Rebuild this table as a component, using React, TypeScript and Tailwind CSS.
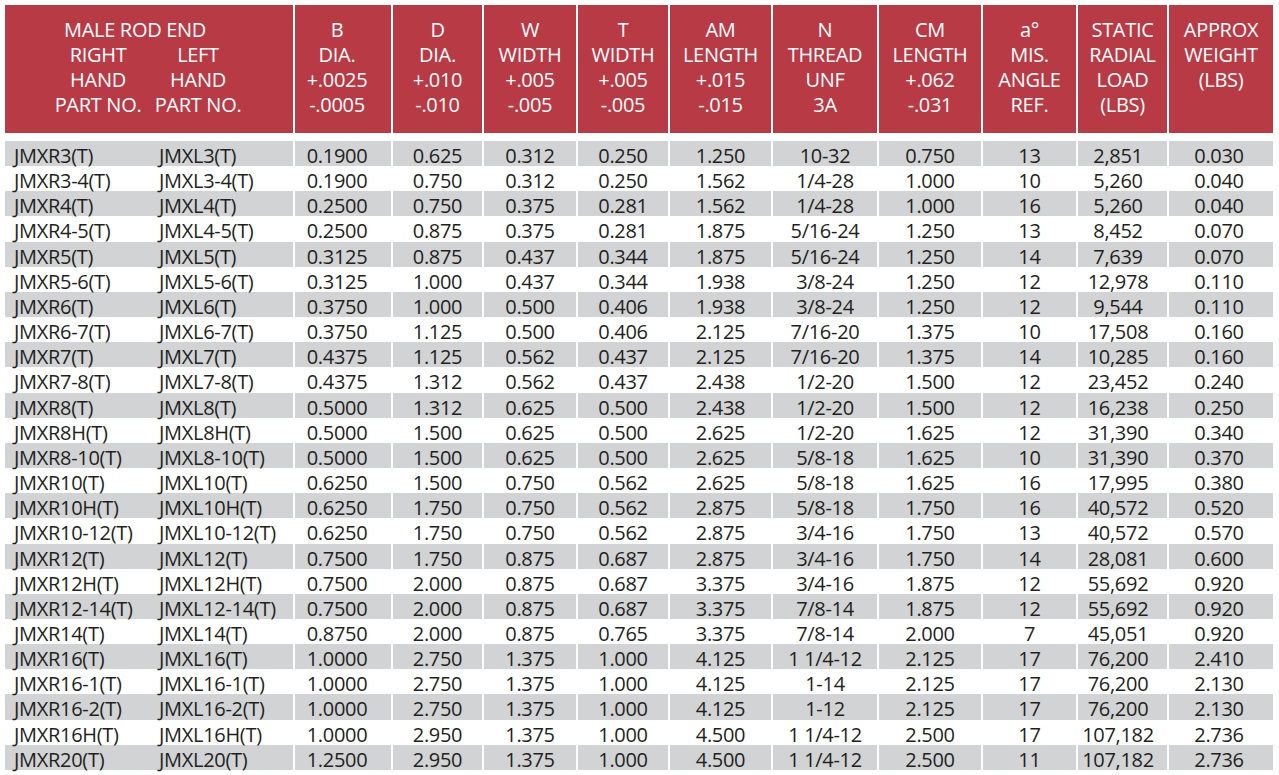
import React from "react"

const headers: string[][] = [
  ["B", "DIA.", "+.0025", "-.0005"],
  ["D", "DIA.", "+.010", "-.010"],
  ["W", "WIDTH", "+.005", "-.005"],
  ["T", "WIDTH", "+.005", "-.005"],
  ["AM", "LENGTH", "+.015", "-.015"],
  ["N", "THREAD", "UNF", "3A"],
  ["CM", "LENGTH", "+.062", "-.031"],
  ["a°", "MIS.", "ANGLE", "REF."],
  ["STATIC", "RADIAL", "LOAD", "(LBS)"],
  ["APPROX", "WEIGHT", "(LBS)"],
]

// widths include the 2px white divider on the left
const headCols = [
  "w-[98px] pr-[12px]",
  "w-[91px]",
  "w-[94px]",
  "w-[92px]",
  "w-[103px]",
  "w-[106px]",
  "w-[104px]",
  "w-[95px]",
  "w-[91px]",
  "w-[106px]",
]

const bodyCols = [
  "w-[98px] pr-[12px]",
  "w-[91px]",
  "w-[94px]",
  "w-[92px]",
  "w-[103px]",
  "w-[106px]",
  "w-[104px]",
  "w-[95px]",
  "w-[91px] pr-[9px]",
  "w-[106px] pr-[4px]",
]

const rows: string[][] = [
  ["JMXR3(T)", "JMXL3(T)", "0.1900", "0.625", "0.312", "0.250", "1.250", "10-32", "0.750", "13", "2,851", "0.030"],
  ["JMXR3-4(T)", "JMXL3-4(T)", "0.1900", "0.750", "0.312", "0.250", "1.562", "1/4-28", "1.000", "10", "5,260", "0.040"],
  ["JMXR4(T)", "JMXL4(T)", "0.2500", "0.750", "0.375", "0.281", "1.562", "1/4-28", "1.000", "16", "5,260", "0.040"],
  ["JMXR4-5(T)", "JMXL4-5(T)", "0.2500", "0.875", "0.375", "0.281", "1.875", "5/16-24", "1.250", "13", "8,452", "0.070"],
  ["JMXR5(T)", "JMXL5(T)", "0.3125", "0.875", "0.437", "0.344", "1.875", "5/16-24", "1.250", "14", "7,639", "0.070"],
  ["JMXR5-6(T)", "JMXL5-6(T)", "0.3125", "1.000", "0.437", "0.344", "1.938", "3/8-24", "1.250", "12", "12,978", "0.110"],
  ["JMXR6(T)", "JMXL6(T)", "0.3750", "1.000", "0.500", "0.406", "1.938", "3/8-24", "1.250", "12", "9,544", "0.110"],
  ["JMXR6-7(T)", "JMXL6-7(T)", "0.3750", "1.125", "0.500", "0.406", "2.125", "7/16-20", "1.375", "10", "17,508", "0.160"],
  ["JMXR7(T)", "JMXL7(T)", "0.4375", "1.125", "0.562", "0.437", "2.125", "7/16-20", "1.375", "14", "10,285", "0.160"],
  ["JMXR7-8(T)", "JMXL7-8(T)", "0.4375", "1.312", "0.562", "0.437", "2.438", "1/2-20", "1.500", "12", "23,452", "0.240"],
  ["JMXR8(T)", "JMXL8(T)", "0.5000", "1.312", "0.625", "0.500", "2.438", "1/2-20", "1.500", "12", "16,238", "0.250"],
  ["JMXR8H(T)", "JMXL8H(T)", "0.5000", "1.500", "0.625", "0.500", "2.625", "1/2-20", "1.625", "12", "31,390", "0.340"],
  ["JMXR8-10(T)", "JMXL8-10(T)", "0.5000", "1.500", "0.625", "0.500", "2.625", "5/8-18", "1.625", "10", "31,390", "0.370"],
  ["JMXR10(T)", "JMXL10(T)", "0.6250", "1.500", "0.750", "0.562", "2.625", "5/8-18", "1.625", "16", "17,995", "0.380"],
  ["JMXR10H(T)", "JMXL10H(T)", "0.6250", "1.750", "0.750", "0.562", "2.875", "5/8-18", "1.750", "16", "40,572", "0.520"],
  ["JMXR10-12(T)", "JMXL10-12(T)", "0.6250", "1.750", "0.750", "0.562", "2.875", "3/4-16", "1.750", "13", "40,572", "0.570"],
  ["JMXR12(T)", "JMXL12(T)", "0.7500", "1.750", "0.875", "0.687", "2.875", "3/4-16", "1.750", "14", "28,081", "0.600"],
  ["JMXR12H(T)", "JMXL12H(T)", "0.7500", "2.000", "0.875", "0.687", "3.375", "3/4-16", "1.875", "12", "55,692", "0.920"],
  ["JMXR12-14(T)", "JMXL12-14(T)", "0.7500", "2.000", "0.875", "0.687", "3.375", "7/8-14", "1.875", "12", "55,692", "0.920"],
  ["JMXR14(T)", "JMXL14(T)", "0.8750", "2.000", "0.875", "0.765", "3.375", "7/8-14", "2.000", "7", "45,051", "0.920"],
  ["JMXR16(T)", "JMXL16(T)", "1.0000", "2.750", "1.375", "1.000", "4.125", "1 1/4-12", "2.125", "17", "76,200", "2.410"],
  ["JMXR16-1(T)", "JMXL16-1(T)", "1.0000", "2.750", "1.375", "1.000", "4.125", "1-14", "2.125", "17", "76,200", "2.130"],
  ["JMXR16-2(T)", "JMXL16-2(T)", "1.0000", "2.750", "1.375", "1.000", "4.125", "1-12", "2.125", "17", "76,200", "2.130"],
  ["JMXR16H(T)", "JMXL16H(T)", "1.0000", "2.950", "1.375", "1.000", "4.500", "1 1/4-12", "2.500", "17", "107,182", "2.736"],
  ["JMXR20(T)", "JMXL20(T)", "1.2500", "2.950", "1.375", "1.000", "4.500", "1 1/4-12", "2.500", "11", "107,182", "2.736"],
]

export default function App() {
  return (
    <div className="w-[1279px] h-[775px] bg-white pt-[5px] pl-[5px] font-['Open_Sans',sans-serif] text-[20px] tracking-[-0.3px] overflow-hidden">
      {/* Header */}
      <div className="flex w-[1268px] h-[128px] text-white leading-[25px]">
        <div className="w-[288px] bg-[#b83a45] pt-[12px]">
          <div className="ml-[40px] w-[180px] text-center whitespace-nowrap">MALE ROD END</div>
          <div className="flex">
            <div className="ml-[43px] w-[100px] text-center whitespace-nowrap">
              <div>RIGHT</div>
              <div>HAND</div>
              <div>PART NO.</div>
            </div>
            <div className="w-[100px] text-center whitespace-nowrap">
              <div>LEFT</div>
              <div>HAND</div>
              <div>PART NO.</div>
            </div>
          </div>
        </div>
        {headers.map((lines, i) => (
          <div key={i} className={`${headCols[i]} border-l-2 border-white bg-[#b83a45] pt-[12px] text-center whitespace-nowrap`}>
            {lines.map((l) => (
              <div key={l}>{l}</div>
            ))}
          </div>
        ))}
      </div>

      {/* Body */}
      <div className="w-[1268px] mt-[8px] text-[#231f20]">
        {rows.map((r, ri) => (
          <div key={r[0]} className={`flex h-[25.16px] leading-[25px] ${ri % 2 === 0 ? "bg-[#d1d3d4]" : "bg-white"}`}>
            <div className="w-[288px] flex pl-[9px] pt-[2px] whitespace-nowrap">
              <span className="w-[145px]">{r[0]}</span>
              <span>{r[1]}</span>
            </div>
            {r.slice(2).map((v, ci) => (
              <div key={ci} className={`${bodyCols[ci]} border-l-2 border-white pt-[2px] text-center whitespace-nowrap`}>
                {v}
              </div>
            ))}
          </div>
        ))}
      </div>
    </div>
  )
}
